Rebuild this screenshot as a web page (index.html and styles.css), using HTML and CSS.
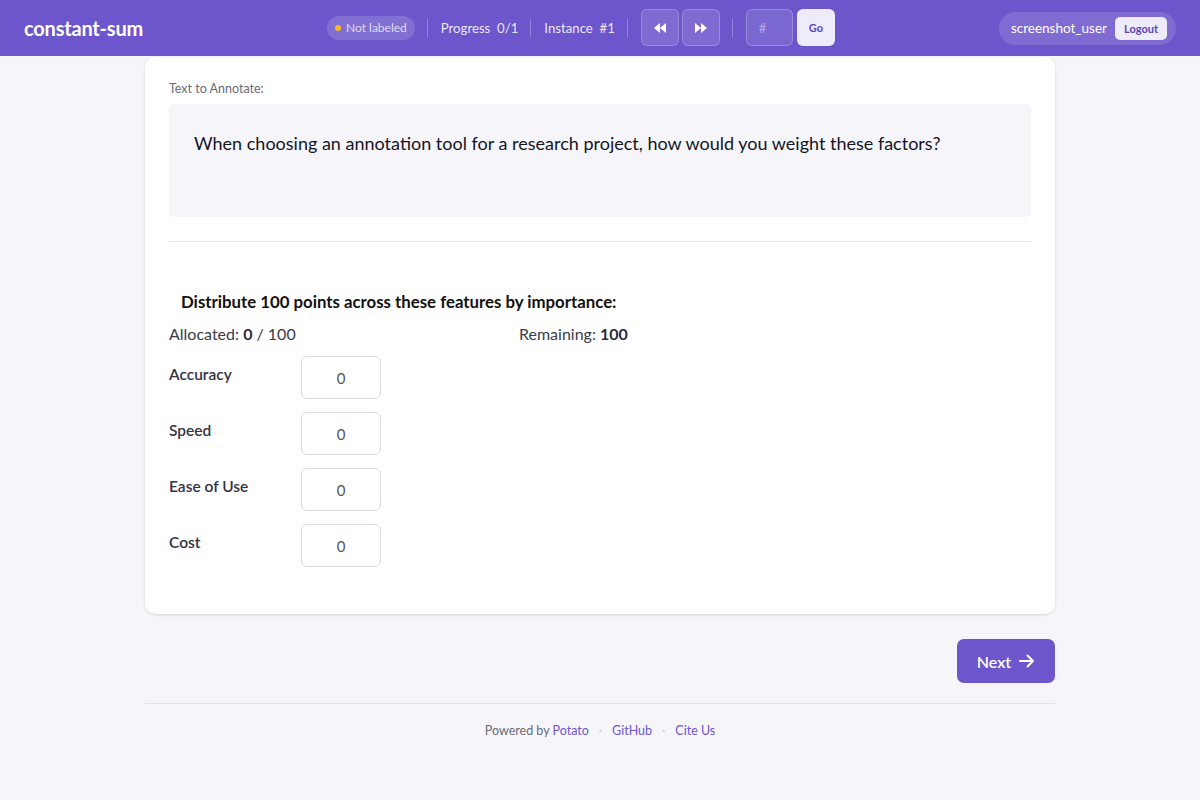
FILE: index.html
```html
<!DOCTYPE html>
<html>
<head>
<meta charset="utf-8">
<link rel="stylesheet" href="styles.css">
</head>
<body>
<header class="topbar">
  <div class="brand">constant-sum</div>
  <div class="center">
    <span class="badge"><span class="dot"></span>Not labeled</span>
    <span class="sep"></span>
    <span class="stat">Progress&nbsp; 0/1</span>
    <span class="sep"></span>
    <span class="stat">Instance&nbsp; #1</span>
    <span class="sep"></span>
    <div class="navbtns">
      <button class="nav"><svg width="12" height="10" viewBox="0 0 12 10"><path d="M6 0 L0 5 L6 10 Z M12 0 L6 5 L12 10 Z" fill="#fff"/></svg></button>
      <button class="nav"><svg width="12" height="10" viewBox="0 0 12 10"><path d="M0 0 L6 5 L0 10 Z M6 0 L12 5 L6 10 Z" fill="#fff"/></svg></button>
    </div>
    <span class="sep"></span>
    <div class="goto">
      <input class="num" placeholder="#">
      <button class="go">Go</button>
    </div>
  </div>
  <div class="user">
    <span class="uname">screenshot_user</span>
    <button class="logout">Logout</button>
  </div>
</header>
<main class="wrap">
  <section class="card">
    <div class="label">Text to Annotate:</div>
    <div class="textbox">When choosing an annotation tool for a research project, how would you weight these factors?</div>
    <hr class="divider">
    <div class="task">
      <h3 class="heading">Distribute 100 points across these features by importance:</h3>
      <div class="totals">
        <span class="tot">Allocated: <b>0</b> / 100</span>
        <span class="tot">Remaining: <b>100</b></span>
      </div>
      <div class="rows">
        <div class="row"><span class="rlabel">Accuracy</span><input class="val" value="0"></div>
        <div class="row"><span class="rlabel">Speed</span><input class="val" value="0"></div>
        <div class="row"><span class="rlabel">Ease of Use</span><input class="val" value="0"></div>
        <div class="row"><span class="rlabel">Cost</span><input class="val" value="0"></div>
      </div>
    </div>
  </section>
  <div class="actions">
    <button class="next">Next <svg width="16" height="14" viewBox="0 0 16 14"><path d="M1 7 H14 M8.5 1.5 L14 7 L8.5 12.5" stroke="#fff" stroke-width="2" fill="none" stroke-linecap="round" stroke-linejoin="round"/></svg></button>
  </div>
  <footer class="footer">
    <span>Powered by <a>Potato</a></span>
    <span class="mid">·</span>
    <a>GitHub</a>
    <span class="mid">·</span>
    <a>Cite Us</a>
  </footer>
</main>
</body>
</html>
```

FILE: styles.css
```css
* { box-sizing: border-box; }
html, body { margin: 0; padding: 0; }
body {
  background: #f5f5fa;
  font-family: "Lato", "Inter", sans-serif;
  color: #1f1f2e;
}
button, input { font-family: inherit; }

.topbar {
  height: 56px;
  background: #6d56cb;
  display: flex;
  align-items: center;
  padding: 0 24px;
  position: relative;
}
.brand {
  color: #fff;
  font-size: 20px;
  font-weight: 700;
  letter-spacing: -0.2px;
  width: 303px;
}
.center {
  display: flex;
  align-items: center;
  gap: 12px;
  flex: 1;
  padding-bottom: 1px;
}
.badge {
  display: inline-flex;
  align-items: center;
  gap: 5px;
  height: 24px;
  padding: 0 8px;
  border-radius: 12px;
  background: rgba(255,255,255,0.15);
  color: rgba(255,255,255,0.75);
  font-size: 12px;
}
.dot { width: 6px; height: 6px; border-radius: 50%; background: #f5b524; }
.sep { width: 1px; height: 18px; background: rgba(255,255,255,0.25); }
.stat { color: rgba(255,255,255,0.88); font-size: 13.2px; margin-left: 1px; }
.navbtns { display: flex; gap: 3px; margin-left: 1px; }
.nav {
  width: 38px; height: 37px;
  border-radius: 6px;
  border: 1px solid rgba(255,255,255,0.22);
  background: rgba(255,255,255,0.12);
  display: flex; align-items: center; justify-content: center;
  padding: 0;
}
.goto { display: flex; gap: 4px; margin-left: 1px; }
.num {
  width: 47px; height: 37px;
  border-radius: 6px;
  border: 1px solid rgba(255,255,255,0.22);
  background: rgba(255,255,255,0.1);
  padding: 0 12px;
  color: #fff;
  font-size: 13px;
}
.num::placeholder { color: rgba(255,255,255,0.45); }
.go {
  width: 38px; height: 37px;
  border-radius: 6px;
  border: none;
  background: #eeebfa;
  color: #5b46b8;
  font-size: 11px;
  font-weight: 700;
}
.user {
  display: flex;
  align-items: center;
  gap: 8px;
  height: 33px;
  padding: 0 9px 0 12px;
  border-radius: 17px;
  background: rgba(255,255,255,0.13);
}
.uname { color: #fff; font-size: 13.5px; }
.logout {
  height: 23px;
  padding: 0 9px;
  border-radius: 5px;
  border: none;
  background: #eeebfa;
  color: #5b46b8;
  font-size: 11px;
  font-weight: 700;
}

.wrap { width: 910px; margin: 0 auto; }
.card {
  background: #fff;
  border-radius: 10px;
  box-shadow: 0 1px 3px rgba(0,0,0,0.12);
  margin-top: 1px;
  padding: 24px 24px 47px;
}
.label { font-size: 12.5px; color: #6b6b76; line-height: 16px; }
.textbox {
  margin-top: 7px;
  background: #f5f5fa;
  border-radius: 6px;
  height: 113px;
  padding: 27px 25px;
  font-size: 18px;
  color: #15151f;
  line-height: 24px;
}
.divider { border: none; border-top: 1px solid #e4e4ea; margin: 24px 0 0; }
.task { padding-top: 49px; }
.heading {
  margin: 0 0 0 12px;
  font-size: 16.8px;
  font-weight: 700;
  color: #111;
  line-height: 22px;
}
.totals { display: flex; margin-top: 11px; font-size: 16px; color: #3b3b4a; line-height: 20px; }
.tot:first-child { width: 350px; }
.tot b { color: #2b2b3a; }
.rows { margin-top: 12px; display: flex; flex-direction: column; gap: 13px; }
.row { display: flex; align-items: flex-start; }
.rlabel { width: 132px; font-size: 15.5px; font-weight: 600; color: #333344; padding-top: 9px; }
.val {
  width: 80px; height: 43px;
  border: 1px solid #dcdce4;
  border-radius: 6px;
  text-align: center;
  font-size: 15px;
  color: #555;
}
.actions { display: flex; justify-content: flex-end; margin-top: 25px; }
.next {
  width: 98px; height: 44px;
  border: none;
  border-radius: 7px;
  background: #6d56cb;
  color: #fff;
  font-size: 16px;
  font-weight: 600;
  display: flex; align-items: center; justify-content: center; gap: 8px;
}
.footer {
  margin-top: 20px;
  border-top: 1px solid #e2e2e8;
  padding-top: 19px;
  display: flex;
  justify-content: center;
  gap: 10px;
  font-size: 12.5px;
  color: #6b6b76;
}
.footer a { color: #6d56cb; }
.mid { color: #c8c8d0; }
```
